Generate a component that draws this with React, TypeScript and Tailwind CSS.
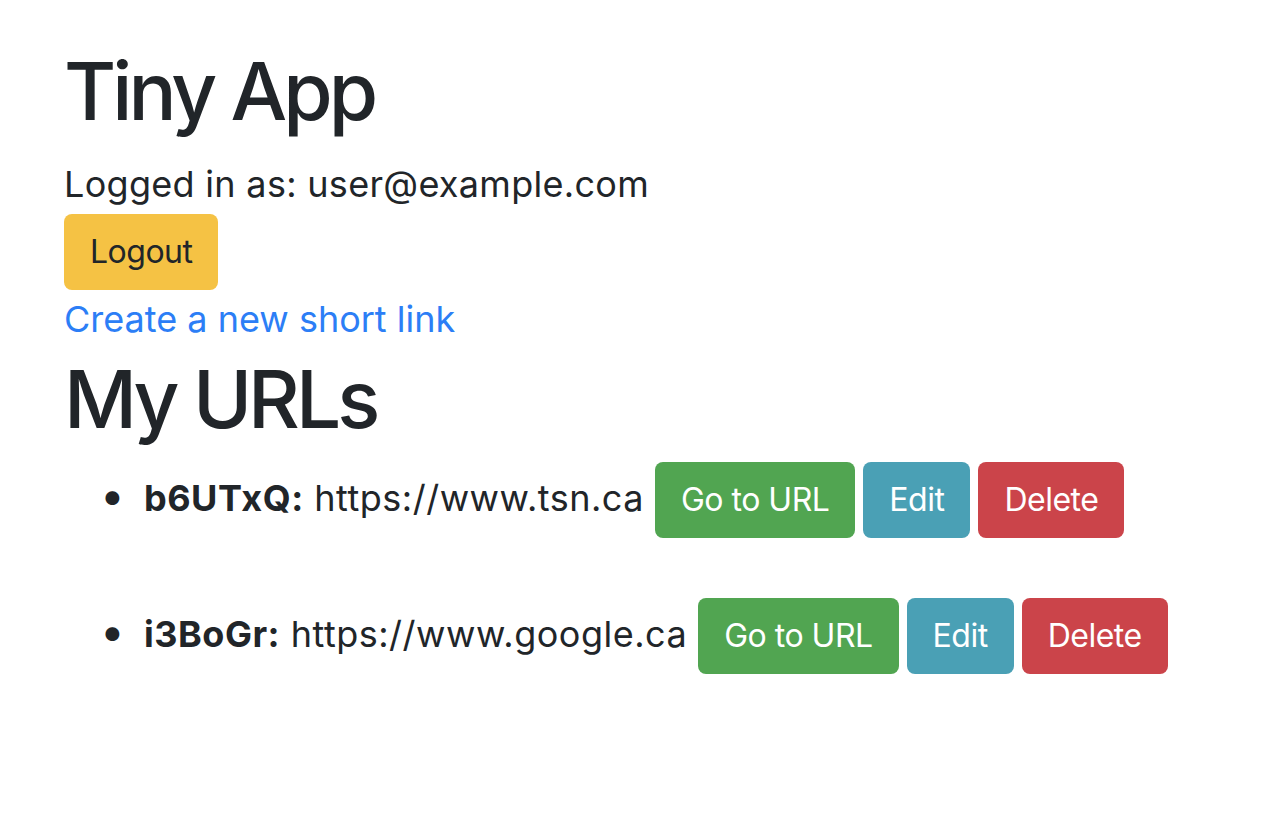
const urls = [
  { id: "b6UTxQ", longURL: "https://www.tsn.ca" },
  { id: "i3BoGr", longURL: "https://www.google.ca" },
];

function Btn({ color, children }: { color: string; children: React.ReactNode }) {
  return (
    <button
      className={`${color} text-white text-[32px] leading-[48px] tracking-[-0.5px] px-[24px] py-[12px] border-2 border-transparent rounded-[8px]`}
    >
      {children}
    </button>
  );
}

export default function App() {
  return (
    <div className="min-h-screen bg-white text-[#212529] px-[64px] pt-[43px] font-['Inter',sans-serif]">
      <h1 className="text-[80px] leading-[96px] font-medium tracking-[-4px]">Tiny App</h1>
      <p className="text-[36px] leading-[43px] tracking-[0.3px] mt-[24px]">Logged in as: user@example.com</p>
      <button className="mt-[8px] bg-[#f5c244] text-[#212529] text-[32px] leading-[48px] tracking-[-0.5px] px-[24px] py-[12px] border-2 border-transparent rounded-[8px]">
        Logout
      </button>
      <div className="mt-[2px] text-[36px] leading-[54px]">
        <a href="#" className="text-[#2c7ef6]">
          Create a new short link
        </a>
      </div>
      <h1 className="text-[80px] leading-[96px] font-medium tracking-[-4px] mt-[5px]">My URLs</h1>
      <ul className="pl-[80px] mt-[15px] text-[36px] leading-[54px]">
        {urls.map((u) => (
          <li key={u.id} className="mb-[60px]">
            <div className="flex items-baseline">
              <span className="w-[24px] -ml-[44px] mr-[20px] text-center text-[44px] leading-none">•</span>
              <span className="tracking-[0.5px]">
                <b className="font-bold">{u.id}:</b> {u.longURL}
              </span>
              <div className="flex gap-[8px] ml-[11px]">
                <Btn color="bg-[#51a551]">Go to URL</Btn>
                <Btn color="bg-[#4aa0b5]">Edit</Btn>
                <Btn color="bg-[#cb444a]">Delete</Btn>
              </div>
            </div>
          </li>
        ))}
      </ul>
    </div>
  );
}
